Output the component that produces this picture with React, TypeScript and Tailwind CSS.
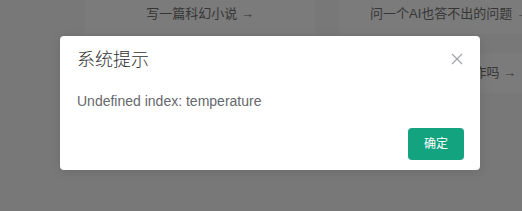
import React from "react";

export default function App() {
  const font = { fontFamily: '"Liberation Sans", "Noto Sans CJK SC", sans-serif' };
  return (
    <div className="relative w-[522px] h-[211px] overflow-hidden bg-[#787878]" style={font}>
      <div className="flex flex-col gap-[19px] pl-[85px] -mt-[6px]">
        <div className="flex gap-[23px]">
          <div className="w-[230px] h-[40px] shrink-0 flex items-center justify-center bg-[#7b7b7b] text-[13px] text-[#363636]">
            写一篇科幻小说 →
          </div>
          <div className="w-[224px] h-[40px] shrink-0 flex items-center justify-start pl-[32px] bg-[#7b7b7b] text-[13px] text-[#363636] whitespace-nowrap">
            问一个AI也答不出的问题 →
          </div>
        </div>
        <div className="flex gap-[23px]">
          <div className="w-[230px] h-[40px] shrink-0 bg-[#7b7b7b]" />
          <div className="w-[224px] h-[40px] shrink-0 flex items-center justify-end pr-[46px] bg-[#7b7b7b] text-[13px] text-[#363636] whitespace-nowrap">
            帮我润色一下写作吗 →
          </div>
        </div>
      </div>

      <div className="absolute left-[60px] top-[36px] w-[420px] bg-white rounded-[4px] shadow-[0_2px_12px_rgba(0,0,0,0.1)] pb-[10px]">
        <div className="relative px-[15px] pt-[15px] pb-[10px]">
          <div className="text-[18px] leading-[18px] font-light text-[#303133] pl-[2px]">系统提示</div>
          <button className="absolute top-[15px] right-[15px] w-[16px] h-[16px] flex items-center justify-center">
            <svg width="12" height="12" viewBox="0 0 12 12">
              <path d="M1 1 L11 11 M11 1 L1 11" stroke="#a0a2a8" strokeWidth="1.1" fill="none" />
            </svg>
          </button>
        </div>
        <div className="px-[15px] py-[10px] pl-[17px] text-[14px] leading-[24px] text-[#66686c]">
          Undefined index: temperature
        </div>
        <div className="flex justify-end px-[15px] pt-[5px] pr-[16px]">
          <button className="w-[56px] h-[32px] rounded-[4px] bg-[#13a37f] text-white text-[12px] flex items-center justify-center">
            确定
          </button>
        </div>
      </div>
    </div>
  );
}
